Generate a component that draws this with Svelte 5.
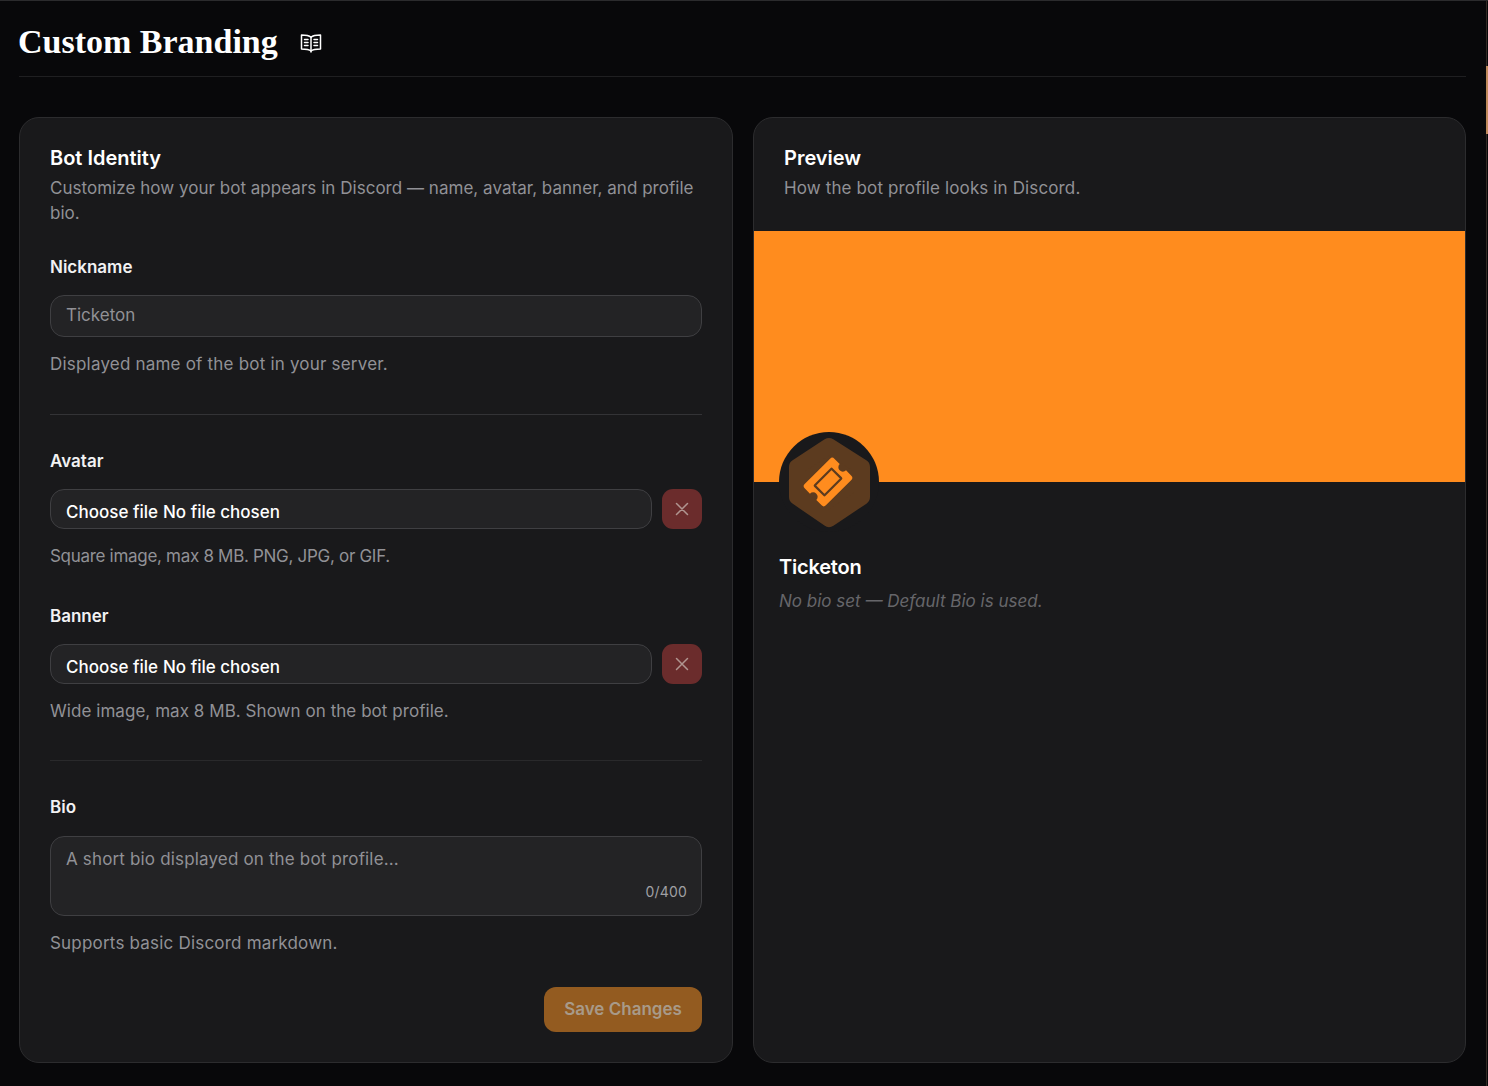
<script lang="ts">
    const maxBio = 400;
    let bio = $state('');
</script>

<div class="page">
    <header class="page-header">
        <h1>Custom Branding</h1>
        <svg class="docs-icon" viewBox="0 0 22 20" width="22" height="20" fill="none" stroke="#fff" stroke-width="1.5" stroke-linejoin="round" stroke-linecap="round">
            <path d="M11 4.2C9.4 2.8 6 2 1.5 2v14c4.5 0 7.9.6 9.5 2 1.6-1.4 5-2 9.5-2V2C16 2 12.6 2.8 11 4.2Z" />
            <path d="M11 4.2V19" />
            <path d="M4.5 6.5h3.5M4.5 9.5h3.5M4.5 12.5h3.5M14 6.5h3.5M14 9.5h3.5M14 12.5h3.5" />
        </svg>
    </header>

    <main class="columns">
        <section class="card form-card">
            <h2>Bot Identity</h2>
            <p class="card-desc">Customize how your bot appears in Discord — name, avatar, banner, and profile bio.</p>

            <div class="field nickname">
                <span class="label">Nickname</span>
                <input class="text-input" type="text" placeholder="Ticketon" />
                <p class="help wide">Displayed name of the bot in your server.</p>
            </div>

            <hr />

            <div class="field">
                <span class="label">Avatar</span>
                <div class="file-row">
                    <div class="file-input"><span>Choose file</span> <span>No file chosen</span></div>
                    <button class="remove" aria-label="Remove avatar">
                        <svg viewBox="0 0 14 14" width="14" height="14" fill="none" stroke="#b09590" stroke-width="1.5" stroke-linecap="round"><path d="M1.5 1.5l11 11M12.5 1.5l-11 11" /></svg>
                    </button>
                </div>
                <p class="help tight">Square image, max 8 MB. PNG, JPG, or GIF.</p>
            </div>

            <div class="field banner-field">
                <span class="label">Banner</span>
                <div class="file-row">
                    <div class="file-input"><span>Choose file</span> <span>No file chosen</span></div>
                    <button class="remove" aria-label="Remove banner">
                        <svg viewBox="0 0 14 14" width="14" height="14" fill="none" stroke="#b09590" stroke-width="1.5" stroke-linecap="round"><path d="M1.5 1.5l11 11M12.5 1.5l-11 11" /></svg>
                    </button>
                </div>
                <p class="help">Wide image, max 8 MB. Shown on the bot profile.</p>
            </div>

            <hr class="second" />

            <div class="field">
                <span class="label">Bio</span>
                <div class="bio-box">
                    <textarea bind:value={bio} placeholder="A short bio displayed on the bot profile..."></textarea>
                    <span class="counter">{bio.length}/{maxBio}</span>
                </div>
                <p class="help wide">Supports basic Discord markdown.</p>
            </div>

            <div class="actions">
                <button class="save" disabled>Save Changes</button>
            </div>
        </section>

        <section class="card preview-card">
            <div class="preview-head">
                <h2>Preview</h2>
                <p class="card-desc preview-desc">How the bot profile looks in Discord.</p>
            </div>
            <div class="banner"></div>
            <div class="profile">
                <div class="avatar">
                    <svg viewBox="0 0 100 100" width="100" height="100">
                        <path d="M50 14 83 35V65L50 87 18 65V35Z" fill="#5c3b1f" stroke="#5c3b1f" stroke-width="16" stroke-linejoin="round" />
                        <g transform="rotate(-45 49 50)">
                            <path d="M31 35H67a3 3 0 0 1 3 3V45.500a4.500 4.500 0 0 0 0 9V62a3 3 0 0 1-3 3H31a3 3 0 0 1-3-3V54.500a4.500 4.500 0 0 0 0-9V38a3 3 0 0 1 3-3Z" fill="#ff8c1e" />
                            <rect x="37" y="43" width="24" height="14" fill="none" stroke="#5c3b1f" stroke-width="2.2" rx="0.5" />
                        </g>
                    </svg>
                </div>
                <div class="bot-name">Ticketon</div>
                <p class="bot-bio">No bio set — Default Bio is used.</p>
            </div>
        </section>
    </main>

    <div class="edge"><span></span></div>
</div>

<style>
    :global(body) {
        margin: 0;
        background: #08080a;
    }

    .page {
        position: relative;
        box-sizing: border-box;
        height: 1086px;
        padding: 0 22px 23px 19px;
        border-top: 1px solid #2b2b2d;
        background: #08080a;
        color: #fff;
        font-family: Inter, "Noto Sans", sans-serif;
        overflow: hidden;
    }

    .page-header {
        display: flex;
        align-items: center;
        gap: 22px;
        height: 75px;
        border-bottom: 1px solid #1f1f21;
    }

    h1 {
        margin: 8px 0 0 -1px;
        font-family: "Liberation Serif", serif;
        font-size: 34px;
        font-weight: 700;
        line-height: 1.2;
    }

    .docs-icon {
        margin-top: 9px;
    }

    .columns {
        display: grid;
        grid-template-columns: 714px 713px;
        gap: 20px;
        margin-top: 40px;
    }

    .card {
        box-sizing: border-box;
        height: 946px;
        background: #19191b;
        border: 1px solid #2c2c2e;
        border-radius: 20px;
        overflow: hidden;
    }

    .form-card {
        padding: 28px 30px 0;
    }

    h2 {
        margin: 0;
        font-size: 20px;
        font-weight: 600;
        line-height: 25px;
    }

    .card-desc {
        margin: 5px 0 0;
        color: #919196;
        font-size: 17px;
        line-height: 25px;
        letter-spacing: 0.03px;
    }

    .preview-desc {
        letter-spacing: 0.13px;
    }

    .field {
        display: flex;
        flex-direction: column;
    }

    .nickname {
        margin-top: 29px;
    }

    .label {
        font-size: 17px;
        font-weight: 600;
        line-height: 24px;
        color: #f2f2f3;
    }

    .text-input {
        box-sizing: border-box;
        height: 42px;
        margin-top: 16px;
        padding: 0 15px 2px;
        background: #232325;
        border: 1px solid #3f3f42;
        border-radius: 14px;
        outline: none;
        color: #fff;
        font: inherit;
        font-size: 17px;
    }

    .text-input::placeholder,
    textarea::placeholder {
        color: #919196;
        opacity: 1;
    }

    .help {
        margin: 15px 0 0;
        color: #919196;
        font-size: 17px;
        line-height: 24px;
        letter-spacing: 0.05px;
    }

    .help.wide {
        letter-spacing: 0.2px;
    }

    .help.tight {
        letter-spacing: -0.3px;
    }

    hr {
        margin: 38px 0 34px;
        border: 0;
        border-top: 1px solid #333336;
    }

    hr.second {
        margin: 37px 0 34px;
        border-top-color: #29292b;
    }

    .file-row {
        display: flex;
        gap: 10px;
        margin-top: 16px;
    }

    .file-input {
        box-sizing: border-box;
        flex: 1;
        height: 40px;
        padding: 5px 15px 0;
        display: flex;
        align-items: center;
        gap: 5px;
        background: #232325;
        border: 1px solid #3f3f42;
        border-radius: 14px;
        font-size: 17px;
        font-weight: 500;
    }

    .remove {
        display: flex;
        align-items: center;
        justify-content: center;
        width: 40px;
        height: 40px;
        padding: 0;
        background: #6b2c2c;
        border: 0;
        border-radius: 11px;
    }

    .banner-field {
        margin-top: 36px;
    }

    .bio-box {
        position: relative;
        margin-top: 17px;
    }

    textarea {
        display: block;
        box-sizing: border-box;
        width: 100%;
        height: 80px;
        padding: 10px 15px;
        background: #232325;
        border: 1px solid #3f3f42;
        border-radius: 14px;
        outline: none;
        resize: none;
        color: #fff;
        font: inherit;
        font-size: 17px;
        line-height: 24px;
        letter-spacing: 0.16px;
    }

    .counter {
        position: absolute;
        right: 15px;
        bottom: 15px;
        color: #a0a0a4;
        font-size: 14px;
        line-height: 18px;
        letter-spacing: 0.2px;
    }

    .actions {
        display: flex;
        justify-content: flex-end;
        margin-top: 32px;
    }

    .save {
        width: 158px;
        height: 45px;
        padding: 0 0 2px;
        background: #935b20;
        border: 0;
        border-radius: 12px;
        color: #a89a89;
        font: inherit;
        font-size: 17px;
        font-weight: 600;
    }

    .preview-head {
        height: 113px;
        box-sizing: border-box;
        padding: 28px 30px 0;
    }

    .banner {
        height: 251px;
        background: #ff8c1e;
    }

    .profile {
        padding: 0 25px;
    }

    .avatar {
        width: 100px;
        height: 100px;
        margin-top: -50px;
        background: #19191b;
        border-radius: 50%;
    }

    .avatar svg {
        display: block;
    }

    .bot-name {
        margin-top: 22px;
        font-size: 20px;
        font-weight: 600;
        line-height: 26px;
        letter-spacing: -0.2px;
    }

    .bot-bio {
        margin: 9px 0 0;
        color: #66666a;
        font-size: 17px;
        font-style: italic;
        line-height: 24px;
    }

    .edge {
        position: absolute;
        top: 0;
        right: 1px;
        bottom: 0;
        width: 1px;
        background: #332b25;
    }

    .edge span {
        position: absolute;
        top: 65px;
        left: 0;
        width: 2px;
        height: 68px;
        background: #c08a5c;
    }
</style>
